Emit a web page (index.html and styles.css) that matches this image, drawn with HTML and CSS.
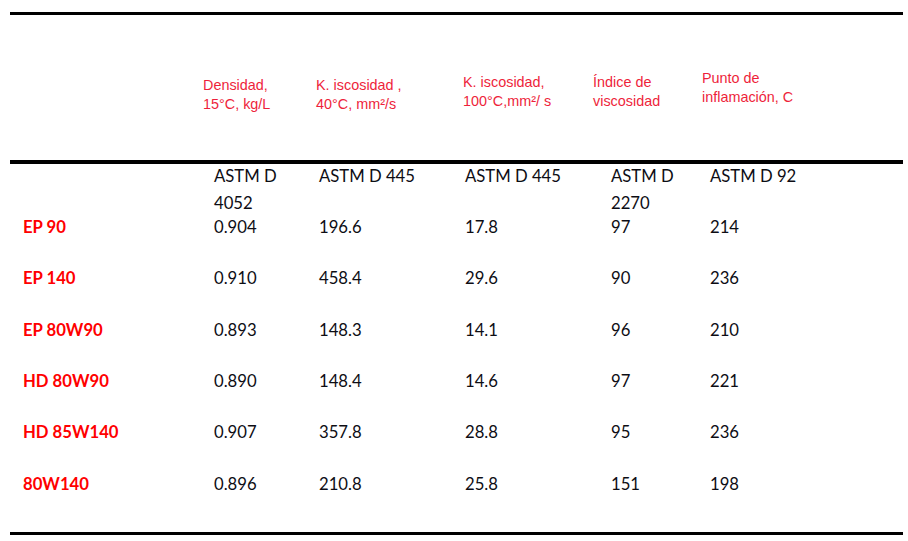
FILE: index.html
```html
<!DOCTYPE html>
<html lang="es">
<head>
<meta charset="utf-8">
<title>Propiedades</title>
<link rel="stylesheet" href="styles.css">
</head>
<body>
<div class="sheet">
  <div class="rule rule-top"></div>
  <div class="grid head">
    <div class="hc c0"></div>
    <div class="hc c1">Densidad,<br>15°C, kg/L</div>
    <div class="hc c2">K. iscosidad ,<br>40°C, mm²/s</div>
    <div class="hc c3">K. iscosidad,<br>100°C,mm²/ s</div>
    <div class="hc c4">Índice de<br>viscosidad</div>
    <div class="hc c5">Punto de<br>inflamación, C</div>
  </div>
  <div class="rule rule-mid"></div>
  <div class="grid std">
    <div class="bc c0"></div>
    <div class="bc c1">ASTM D<br>4052</div>
    <div class="bc c2">ASTM D 445</div>
    <div class="bc c3">ASTM D 445</div>
    <div class="bc c4">ASTM D<br>2270</div>
    <div class="bc c5">ASTM D 92</div>
  </div>
  <div class="rows">
    <div class="grid row">
      <div class="bc c0 name">EP 90</div>
      <div class="bc c1">0.904</div><div class="bc c2">196.6</div><div class="bc c3">17.8</div><div class="bc c4">97</div><div class="bc c5">214</div>
    </div>
    <div class="grid row">
      <div class="bc c0 name">EP 140</div>
      <div class="bc c1">0.910</div><div class="bc c2">458.4</div><div class="bc c3">29.6</div><div class="bc c4">90</div><div class="bc c5">236</div>
    </div>
    <div class="grid row">
      <div class="bc c0 name">EP 80W90</div>
      <div class="bc c1">0.893</div><div class="bc c2">148.3</div><div class="bc c3">14.1</div><div class="bc c4">96</div><div class="bc c5">210</div>
    </div>
    <div class="grid row">
      <div class="bc c0 name">HD 80W90</div>
      <div class="bc c1">0.890</div><div class="bc c2">148.4</div><div class="bc c3">14.6</div><div class="bc c4">97</div><div class="bc c5">221</div>
    </div>
    <div class="grid row">
      <div class="bc c0 name">HD 85W140</div>
      <div class="bc c1">0.907</div><div class="bc c2">357.8</div><div class="bc c3">28.8</div><div class="bc c4">95</div><div class="bc c5">236</div>
    </div>
    <div class="grid row">
      <div class="bc c0 name">80W140</div>
      <div class="bc c1">0.896</div><div class="bc c2">210.8</div><div class="bc c3">25.8</div><div class="bc c4">151</div><div class="bc c5">198</div>
    </div>
  </div>
  <div class="rule rule-bottom"></div>
</div>
</body>
</html>
```
FILE: styles.css
```css
html, body {
  margin: 0;
  padding: 0;
  background: #ffffff;
}

.sheet {
  margin: 12px 0 0 10px;
  width: 893px;
}

.rule {
  background: #000000;
  height: 3px;
}

.rule-mid {
  height: 4px;
}

.grid {
  display: grid;
  grid-template-columns: 193px 113px 147px 130px 109px 1fr;
}

/* header */
.head {
  height: 145px;
  font-family: "Liberation Sans", Arial, sans-serif;
  font-size: 14.4px;
  line-height: 19px;
  color: #ee1f3b;
}

.hc { white-space: nowrap; }
.head .c1 { padding-top: 61px; }
.head .c2 { padding-top: 61px; }
.head .c3 { padding-top: 58px; }
.head .c4 { padding-top: 58px; }
.head .c5 { padding-top: 54px; }

/* body */
.std, .row {
  font-family: Lato, "Open Sans", sans-serif;
  font-size: 16.7px;
  color: #0d0d14;
}

.bc { white-space: nowrap; }

.std {
  height: 51.2px;
  line-height: 27px;
}

.std .bc { margin-top: -1px; }

.rows {
  padding-bottom: 9px;
}

.row {
  height: 51.3px;
  line-height: 20px;
}

.row .bc { padding-top: 2px; }

.bc.c0 { padding-left: 13px; }
.bc.c1 { padding-left: 11px; }
.bc.c2 { padding-left: 3px; }
.bc.c3 { padding-left: 2px; }
.bc.c4 { padding-left: 18px; }
.bc.c5 { padding-left: 8px; }

.name {
  color: #ff0000;
  font-weight: 700;
}
```
